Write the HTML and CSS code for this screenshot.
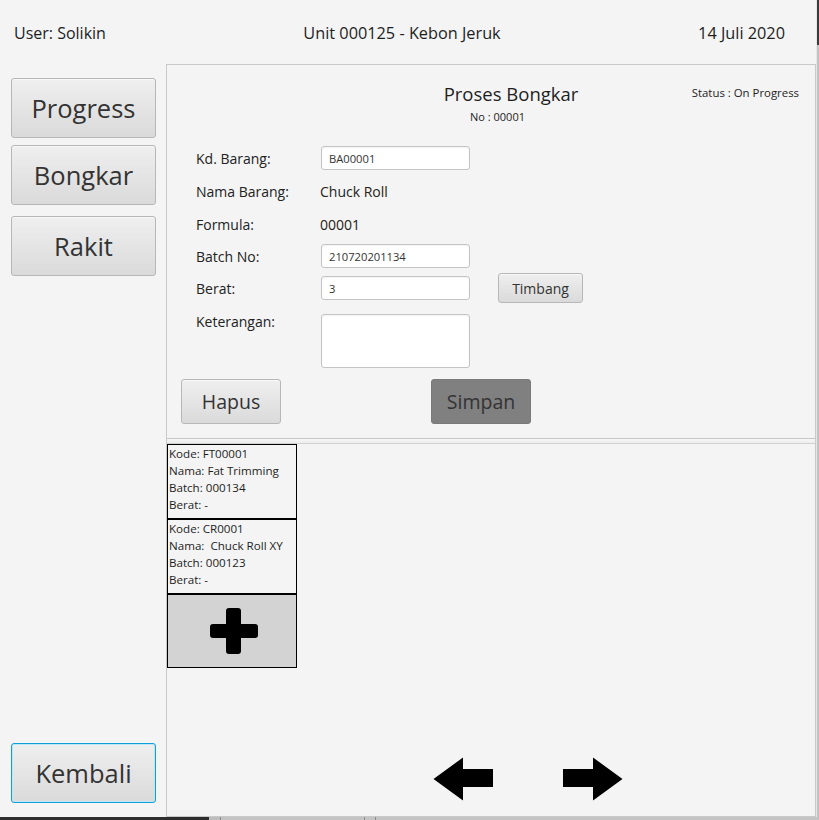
FILE: index.html
```html
<!DOCTYPE html>
<html lang="id">
<head>
<meta charset="utf-8">
<title>Proses Bongkar</title>
<link rel="stylesheet" href="styles.css">
</head>
<body>
<div class="screen">
  <div class="window">
    <header class="topbar">
      <span>User: Solikin</span>
      <span>Unit 000125 - Kebon Jeruk</span>
      <span>14 Juli 2020</span>
    </header>
    <div class="body">
      <nav class="sidebar">
        <div class="nav-top">
          <button class="btn nav-btn">Progress</button>
          <button class="btn nav-btn nav-bongkar">Bongkar</button>
          <button class="btn nav-btn nav-rakit">Rakit</button>
        </div>
        <button class="btn nav-btn focused">Kembali</button>
      </nav>
      <main class="panel">
        <section class="form-area">
          <div class="title-row">
            <div class="title-block">
              <h1 class="title">Proses Bongkar</h1>
              <div class="no">No : 00001</div>
            </div>
            <div class="status">Status : On Progress</div>
          </div>
          <div class="form">
            <label class="lbl">Kd. Barang:</label>
            <input class="field" type="text" value="BA00001">
            <span></span>

            <label class="lbl">Nama Barang:</label>
            <span class="val">Chuck Roll</span>
            <span></span>

            <label class="lbl">Formula:</label>
            <span class="val">00001</span>
            <span></span>

            <label class="lbl">Batch No:</label>
            <input class="field" type="text" value="210720201134">
            <span></span>

            <label class="lbl">Berat:</label>
            <input class="field" type="text" value="3">
            <button class="btn timbang">Timbang</button>

            <label class="lbl lbl-top">Keterangan:</label>
            <textarea class="field area"></textarea>
            <span></span>
          </div>
          <div class="actions">
            <button class="btn act">Hapus</button>
            <button class="btn act simpan">Simpan</button>
          </div>
        </section>
        <div class="divider"></div>
        <section class="list-area">
          <div class="cards">
            <div class="card">
              <div>Kode: FT00001</div>
              <div>Nama: Fat Trimming</div>
              <div>Batch: 000134</div>
              <div>Berat: -</div>
            </div>
            <div class="card">
              <div>Kode: CR0001</div>
              <div class="pre">Nama:  Chuck Roll XY</div>
              <div>Batch: 000123</div>
              <div>Berat: -</div>
            </div>
            <div class="card add">
              <svg width="48" height="46" viewBox="0 0 48 46" aria-hidden="true">
                <rect x="16" y="0" width="15" height="46" rx="3" fill="#000"/>
                <rect x="0" y="16" width="48" height="14" rx="3" fill="#000"/>
              </svg>
            </div>
          </div>
          <div class="arrows">
            <svg class="arrow" width="60" height="44" viewBox="0 0 60 44" aria-hidden="true">
              <polygon points="0.5,22 30,0.5 30,12 60,12 60,30 30,30 30,43.5" fill="#000"/>
            </svg>
            <svg class="arrow" width="60" height="44" viewBox="0 0 60 44" aria-hidden="true">
              <polygon points="59.5,22 30,0.5 30,12 0,12 0,30 30,30 30,43.5" fill="#000"/>
            </svg>
          </div>
        </section>
      </main>
    </div>
  </div>
  <div class="edge-right"></div>
</div>
<div class="edge-bottom"></div>
</body>
</html>
```

FILE: styles.css
```css
html, body {
  margin: 0;
  padding: 0;
}

body {
  width: 819px;
  height: 820px;
  overflow: hidden;
  background: #f4f4f4;
  font-family: "Open Sans", "Noto Sans", sans-serif;
  color: #222;
}

.screen {
  display: flex;
  height: 817px;
}

.window {
  width: 816px;
  height: 817px;
  display: flex;
  flex-direction: column;
}

.edge-right {
  width: 3px;
  background: linear-gradient(#3b3b3b 0 45px, #c3c3c3 45px);
  border-left: 1px solid #e6e6e6;
  box-sizing: border-box;
}

.edge-bottom {
  height: 3px;
  background: linear-gradient(to right,
    #2e2e2e 0 209px,
    #bdbdbd 209px 220px,
    #8a8a8a 220px 221px,
    #c4c4c4 221px 364px,
    #8a8a8a 364px 365px,
    #c4c4c4 365px 375px,
    #8a8a8a 375px 376px,
    #c4c4c4 376px);
}

/* Header */
.topbar {
  height: 64px;
  flex: none;
  display: flex;
  justify-content: space-between;
  align-items: center;
  padding: 2px 31px 0 14px;
  box-sizing: border-box;
  font-size: 16px;
  color: #1e1e1e;
}

.topbar span:nth-child(2),
.topbar span:nth-child(3) {
  font-size: 16.3px;
}

.body {
  flex: 1;
  display: flex;
  min-height: 0;
}

/* Sidebar */
.sidebar {
  width: 166px;
  flex: none;
  display: flex;
  flex-direction: column;
  justify-content: space-between;
  padding: 14px 10px 14px 11px;
  box-sizing: border-box;
}

.nav-top {
  display: flex;
  flex-direction: column;
}

.btn {
  font-family: "Open Sans", "Noto Sans", sans-serif;
  color: #333;
  border: 1px solid #b7b7b7;
  border-radius: 3px;
  background: linear-gradient(#efefef, #dadada);
  box-shadow: inset 0 1px 0 #f8f8f8;
  padding: 0;
  box-sizing: border-box;
  cursor: default;
}

.nav-btn {
  width: 145px;
  height: 60px;
  font-size: 25.5px;
}

.nav-bongkar {
  margin-top: 7px;
}

.nav-rakit {
  margin-top: 11px;
}

.focused {
  border-color: #0ea0d6;
  box-shadow: inset 0 0 0 1px #bfe6f5;
}

/* Panel */
.panel {
  flex: 1;
  display: flex;
  flex-direction: column;
  border: 1px solid #c9c9c9;
  box-sizing: border-box;
  min-width: 0;
}

.form-area {
  height: 373px;
  flex: none;
  display: flex;
  flex-direction: column;
}

.title-row {
  display: flex;
  padding-top: 17px;
}

.title-block {
  margin-left: 244px;
  width: 200px;
  text-align: center;
}

.title {
  margin: 0;
  font-weight: normal;
  font-size: 18.5px;
  line-height: 24px;
  color: #1e1e1e;
}

.no {
  margin-top: 4px;
  margin-right: 27px;
  font-size: 11px;
  line-height: 14px;
  color: #1e1e1e;
}

.status {
  margin-left: auto;
  margin-right: 16px;
  margin-top: 4px;
  font-size: 11.4px;
  line-height: 14px;
  color: #1e1e1e;
}

.form {
  margin-top: 17px;
  padding-left: 29px;
  display: grid;
  grid-template-columns: 125px 149px auto;
  grid-template-rows: 34px 33px 32px 32px 32px auto;
  align-items: center;
  justify-items: start;
}

.lbl {
  font-size: 14px;
  line-height: 19px;
  color: #222;
}

.lbl-top {
  align-self: start;
  padding-top: 8px;
}

.val {
  font-size: 14px;
  line-height: 19px;
  color: #222;
  margin-left: -1px;
}

.field {
  width: 149px;
  height: 24px;
  border: 1px solid #c4c4c4;
  border-radius: 3px;
  background: #fff;
  box-shadow: inset 0 1px 2px rgba(0, 0, 0, 0.06);
  font-family: "Open Sans", "Noto Sans", sans-serif;
  font-size: 11.2px;
  color: #333;
  padding: 0 7px;
  box-sizing: border-box;
  outline: none;
  margin: 0;
}

.area {
  height: 54px;
  margin-top: 10px;
  resize: none;
  padding: 4px 7px;
}

.timbang {
  margin-left: 28px;
  width: 85px;
  height: 30px;
  font-size: 14px;
}

.actions {
  display: flex;
  margin-top: 11px;
  padding-left: 14px;
  gap: 150px;
}

.act {
  width: 100px;
  height: 45px;
  font-size: 19.5px;
}

.simpan {
  background: #808080;
  border-color: #7a7a7a;
  box-shadow: none;
  color: #333;
}

.divider {
  height: 6px;
  flex: none;
  border-top: 1px solid #c6c6c6;
  border-bottom: 1px solid #d2d2d2;
  background: linear-gradient(#f7f7f7, #ececec);
  box-sizing: border-box;
}

/* List */
.list-area {
  flex: 1;
  display: flex;
  flex-direction: column;
  justify-content: space-between;
  min-height: 0;
}

.cards {
  display: flex;
  flex-direction: column;
  width: 130px;
}

.card {
  height: 75px;
  border: 1px solid #000;
  box-sizing: border-box;
  padding: 0 1px;
  font-size: 11.6px;
  line-height: 17px;
  color: #1e1e1e;
  white-space: nowrap;
}

.pre {
  white-space: pre;
}

.add {
  background: #d3d3d3;
  display: flex;
  align-items: center;
  justify-content: center;
  height: 74px;
  padding: 0 0 0 3px;
}

.arrows {
  display: flex;
  gap: 70px;
  padding-left: 266px;
  padding-bottom: 15px;
}

.arrow {
  display: block;
}
```
